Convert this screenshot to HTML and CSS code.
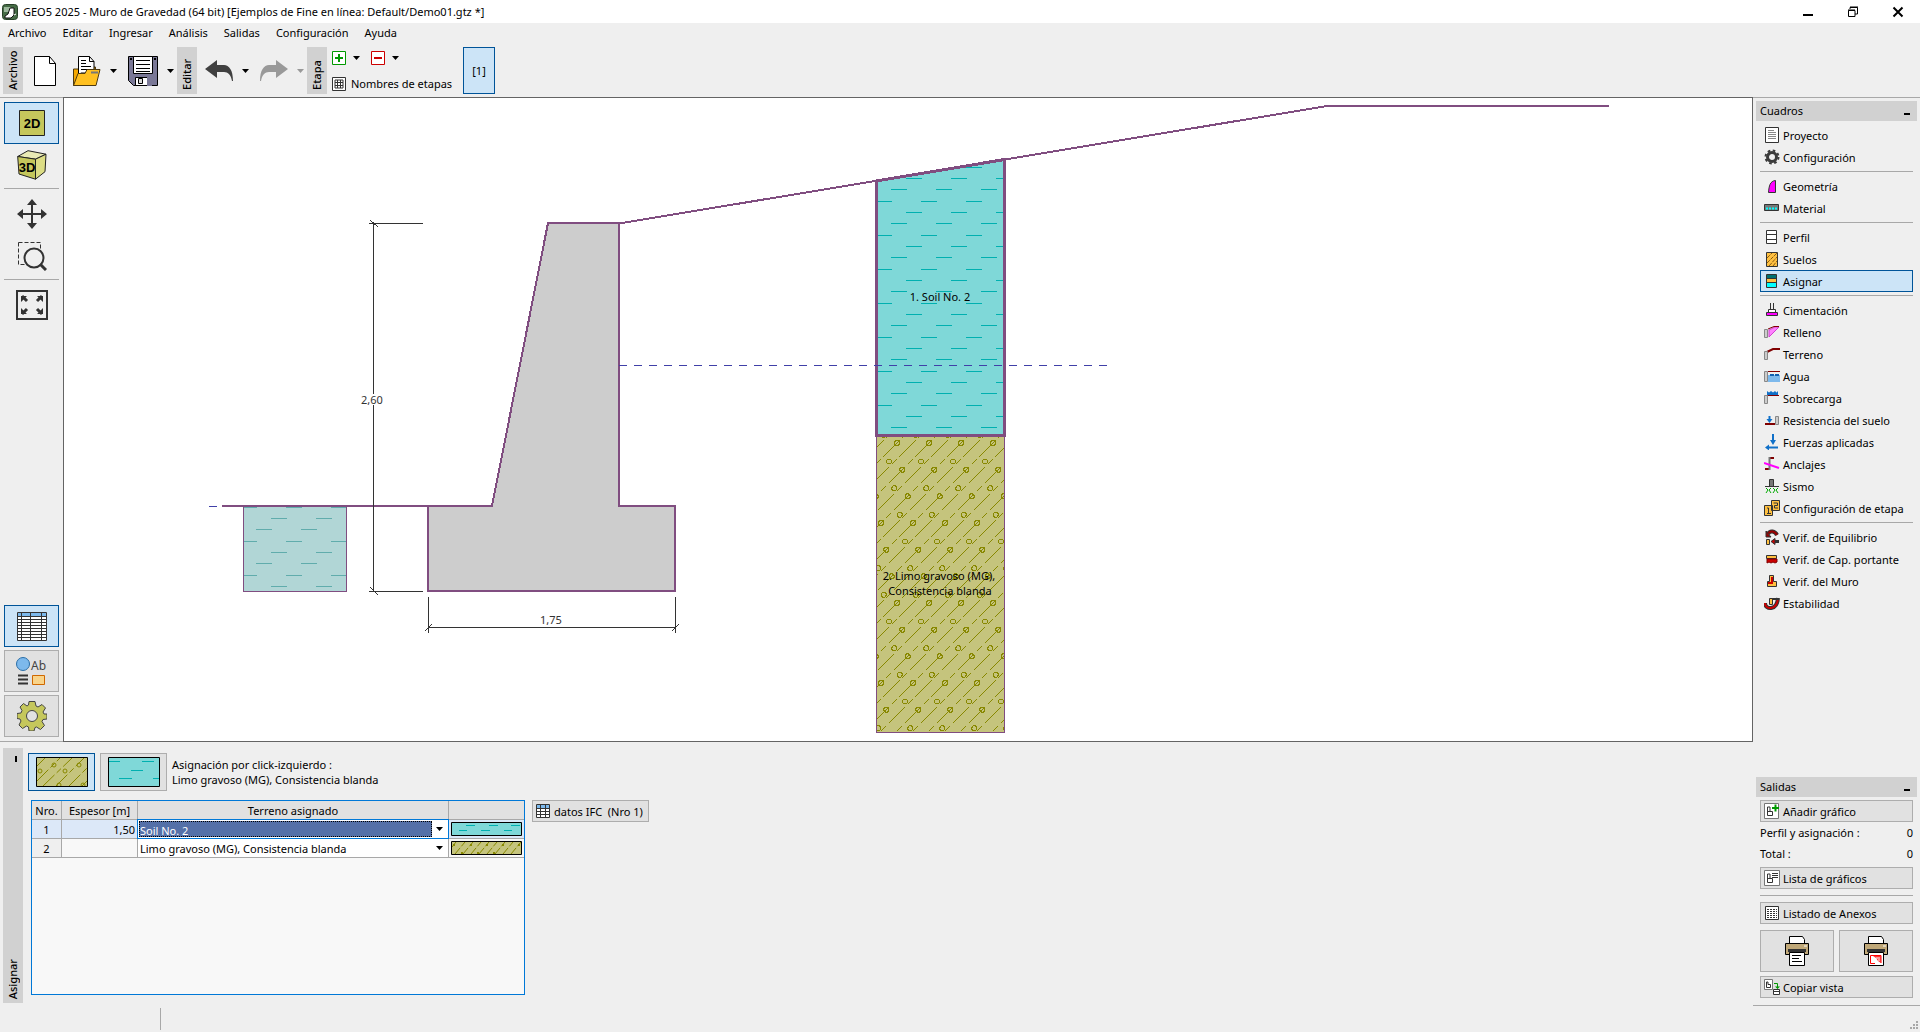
FILE: index.html
```html
<!DOCTYPE html>
<html lang="es">
<head>
<meta charset="utf-8">
<title>GEO5 2025 - Muro de Gravedad</title>
<link rel="stylesheet" href="styles.css">
</head>
<body>
<div class="app">
  <header class="titlebar">
    <svg class="app-icon" width="16" height="16" viewBox="0 0 16 16"><rect x=".5" y=".5" width="15" height="15" rx="3" fill="#456b45" stroke="#274027"/><path d="M2 3h7L7 8H2z" fill="#9db89d"/><path d="M3 12l3-2 2-6h4v7l-3 3H3z" fill="#fff" stroke="#111"/><path d="M12 11l2-1" stroke="#fff"/></svg>
    <h1 class="title">GEO5 2025 - Muro de Gravedad (64 bit) [Ejemplos de Fine en línea: Default/Demo01.gtz *]</h1>
    <div class="window-controls">
      <button class="win-btn" aria-label="Minimizar"><svg width="12" height="12" viewBox="0 0 12 12"><path d="M1 9h10" stroke="#000" stroke-width="2"/></svg></button>
      <button class="win-btn" aria-label="Restaurar"><svg width="12" height="12" viewBox="0 0 12 12"><path d="M3 3V1.500h7.500V8H8M1.500 4.500h6.500v6h-6.500zM1 4h7M3 1h8" fill="none" stroke="#000"/></svg></button>
      <button class="win-btn" aria-label="Cerrar"><svg width="12" height="12" viewBox="0 0 12 12"><path d="M1.500 1.500l9 9M10.500 1.500l-9 9" stroke="#000" stroke-width="2"/></svg></button>
    </div>
  </header>

  <nav class="menubar">
    <button>Archivo</button><button>Editar</button><button>Ingresar</button><button>Análisis</button><button>Salidas</button><button>Configuración</button><button>Ayuda</button>
  </nav>

  <div class="toolbar">
    <span class="strip">Archivo</span>
    <div class="tools tools-file">
      <button class="tool" aria-label="Nuevo"><svg width="24" height="32" viewBox="0 0 24 32"><path d="M1.500 1.500h15l6 7v22h-21z" fill="#fff" stroke="#000"/><path d="M16.500 1.500v7h6" fill="none" stroke="#000"/></svg></button>
      <button class="tool" aria-label="Abrir"><svg width="28" height="32" viewBox="0 0 28 32"><path d="M.500 30.500v-16.500h6v-2h16v18z" fill="#f5a800" stroke="#4d3a10"/><path d="M5.500 20V1.500h11l4.500 5V18H8z" fill="#fff" stroke="#000"/><path d="M16.500 1.500v5h4.500M8 5.500h5M8 8.500h5M8 11.500h10M8 14.500h9" fill="none" stroke="#000"/><path d="M.500 30.500l4.500-12h7l2-4h13l-4 16z" fill="#ffc020" stroke="#4d3a10"/><path d="M18 17.500h7" stroke="#777" stroke-width="2"/></svg></button>
      <button class="drop" aria-label="Abrir recientes"><svg width="7" height="4" viewBox="0 0 7 4"><path d="M0 0h7L3.500 4z"/></svg></button>
      <button class="tool" aria-label="Guardar"><svg width="30" height="32" viewBox="0 0 30 32"><path d="M.500 1.500h29v29h-24l-5-5z" fill="#7a7896" stroke="#000"/><path d="M5.500 1.500h19v17h-19z" fill="#fff" stroke="#000"/><path d="M8 5.500h14M8 9.500h14M8 13.500h14M8 16.500h14" stroke="#000"/><path d="M2 3h2v2H2zM26 3h2v2h-2z"/><path d="M7.500 22.500h16v8h-16z" fill="#fff" stroke="#000"/><path d="M19 22h5v9h-5z" fill="#7a7896"/><path d="M10.500 23.500h4v5h-4z" fill="#ddd" stroke="#000"/></svg></button>
      <button class="drop" aria-label="Guardar como"><svg width="7" height="4" viewBox="0 0 7 4"><path d="M0 0h7L3.500 4z"/></svg></button>
    </div>
    <span class="strip">Editar</span>
    <div class="tools tools-edit">
      <button class="tool" aria-label="Deshacer"><svg width="28" height="22" viewBox="0 0 28 22"><path d="M0 9L12 0v5h7c5 0 9 5 9 16h-1c-1-6-4-9-8-9h-7v6z" fill="#404040"/></svg></button>
      <button class="drop" aria-label="Lista deshacer"><svg width="7" height="4" viewBox="0 0 7 4"><path d="M0 0h7L3.500 4z"/></svg></button>
      <button class="tool" aria-label="Rehacer"><svg width="28" height="22" viewBox="0 0 28 22"><path d="M28 9L16 0v5H9C4 5 0 10 0 21h1c1-6 4-9 8-9h7v6z" fill="#999"/></svg></button>
      <button class="drop" aria-label="Lista rehacer"><svg width="7" height="4" viewBox="0 0 7 4"><path d="M0 0h7L3.500 4z" fill="#999"/></svg></button>
    </div>
    <span class="strip">Etapa</span>
    <div class="stage">
      <div class="stage-row">
        <button class="tool" aria-label="Agregar etapa"><svg width="14" height="14" viewBox="0 0 14 14"><path d="M.500.500h13v13H.500z" fill="#fff" stroke="#090"/><path d="M7 3v8M3 7h8" stroke="#090" stroke-width="2"/></svg></button>
        <button class="drop" aria-label="Opciones de agregar"><svg width="7" height="4" viewBox="0 0 7 4"><path d="M0 0h7L3.500 4z"/></svg></button>
        <button class="tool" aria-label="Quitar etapa"><svg width="14" height="14" viewBox="0 0 14 14"><path d="M.500.500h13v13H.500z" fill="#fff" stroke="#c00"/><path d="M3 7h8" stroke="#c00" stroke-width="2"/></svg></button>
        <button class="drop" aria-label="Opciones de quitar"><svg width="7" height="4" viewBox="0 0 7 4"><path d="M0 0h7L3.500 4z"/></svg></button>
      </div>
      <button class="stage-names"><svg width="14" height="14" viewBox="0 0 14 14"><path d="M.500.500h13v13H.500z" fill="#fff" stroke="#333"/><path d="M3 3h8v8H3zM3 5.500h8M3 8.500h8M5.500 3v8M8.500 3v8" fill="none" stroke="#333"/></svg>Nombres de etapas</button>
    </div>
    <button class="stage-tab">[1]</button>
  </div>

  <main class="workspace">
    <aside class="views">
      <button class="view selected" aria-label="Vista 2D"><svg width="26" height="26" viewBox="0 0 26 26"><path d="M.500.500h25v25H.500z" fill="#c5c75c" stroke="#222"/><text x="13" y="18" class="view-label">2D</text></svg></button>
      <button class="view plain" aria-label="Vista 3D"><svg width="30" height="30" viewBox="0 0 30 30"><g stroke="#222" stroke-linejoin="round"><path d="M.700 6.500L11 .700l18 3.500-10.500 5z" fill="#e9eab5"/><path d="M.700 6.500l17.800 2.700v20L2 24z" fill="#c5c75c"/><path d="M18.500 9.200l10.500-5-1 17.500-9.500 7.500z" fill="#dcdd85"/></g><text x="10" y="22" class="view-label">3D</text></svg></button>
      <hr>
      <button class="view plain" aria-label="Mover"><svg width="30" height="30" viewBox="0 0 30 30"><path d="M15 5v20M5 15h20" stroke="#333" stroke-width="2"/><path d="M15 0l5 6H10zM15 30l5-6H10zM0 15l6-5v10zM30 15l-6-5v10z" fill="#333"/></svg></button>
      <button class="view plain" aria-label="Ampliar zona"><svg width="30" height="30" viewBox="0 0 30 30"><path d="M1.500 1.500h22v22h-22z" fill="none" stroke="#333" stroke-dasharray="4 2"/><circle cx="17" cy="17" r="9.500" fill="#efefef" stroke="#333" stroke-width="2"/><path d="M23 23l6 6" stroke="#333" stroke-width="3"/></svg></button>
      <hr>
      <button class="view plain" aria-label="Ajustar vista"><svg width="32" height="30" viewBox="0 0 32 30"><path d="M1 1h30v28H1z" fill="none" stroke="#333" stroke-width="2"/><path d="M6 6l5 5M26 6l-5 5M6 24l5-5M26 24l-5-5" stroke="#333" stroke-width="3"/><path d="M5 6h6L5 12zM27 6h-6l6 6zM5 24h6l-6-6zM27 24h-6l6-6z" fill="#333"/></svg></button>
      <div class="view-modes">
        <button class="view selected" aria-label="Tabla"><svg width="30" height="29" viewBox="0 0 30 29"><path d="M.500.500h29v28H.500z" fill="#fff"/><path d="M1 1h28v4H1z" fill="#7db9ec"/><path d="M.500.500h29v28H.500zM4.500 0v29M13.500 0v29M24.500 0v29M0 4.500h30M0 7.500h30M0 10.500h30M0 13.500h30M0 16.500h30M0 19.500h30M0 22.500h30M0 25.500h30" fill="none" stroke="#333"/></svg></button>
        <button class="view raised" aria-label="Leyenda"><svg width="32" height="28" viewBox="0 0 32 28"><circle cx="7" cy="7" r="6.500" fill="#7db9ec" stroke="#2b6fa8"/><path d="M2 18.500h10M2 22.500h10M2 26.500h10" stroke="#333" stroke-width="2"/><path d="M16.500 18.500h12v9h-12z" fill="#f9d48a" stroke="#d06800"/><text x="15" y="13" class="legend-label">Ab</text></svg></button>
        <button class="view raised" aria-label="Ajustes"><svg width="30" height="30" viewBox="-15 -15 30 30"><path d="M-3-14.500h6l1 4.500 2 1 4-2.500 3.500 3.500L11-4l1 2 3 0v5l-4 .500-1 2 2.500 4-4 4-4-2.500-1.500.500-1 3.500h-5l-.500-4-2-1-4 2.500-3.500-3.500L-11 5l-1-2-3-.500v-5l4-.500 1-2.500-2-3.500 3.500-3.500L-5-10l1.500-1z" fill="#c5c75c" stroke="#444"/><circle r="5.500" fill="#e1e1e1" stroke="#444"/></svg></button>
      </div>
    </aside>

    <section class="canvas">
      <svg class="drawing" viewBox="64 98 1688 643">
        <defs>
          <pattern id="silt" patternUnits="userSpaceOnUse" x="876" y="201" width="45" height="34"><path d="M0 .500h16M30 11.500h15M0 11.500h1M15 22.500h16" stroke="#00b0b0"/></pattern>
          <pattern id="silt-pale" patternUnits="userSpaceOnUse" x="241" y="541" width="45" height="34"><path d="M0 .500h16M30 11.500h15M0 11.500h1M15 22.500h16" stroke="#60acac"/></pattern>
          <pattern id="gravel" patternUnits="userSpaceOnUse" x="860" y="430" width="32" height="160">
            <g fill="none" stroke="#888800">
              <path stroke-dasharray="23 4 7 3.710" d="M-142 160L18 0M-110 160L50 0M-78 160L82 0M-46 160L114 0M-14 160L146 0M18 160L178 0M-158 160L2 0M-126 160L34 0M-94 160L66 0M-62 160L98 0M-30 160L130 0M2 160L162 0"/>
              <circle cx="5" cy="13" r="2.500"/><circle cx="10.300" cy="39.700" r="2.500"/><circle cx="15.700" cy="66.300" r="2.500"/><circle cx="21" cy="93" r="2.500"/><circle cx="26.300" cy="119.700" r="2.500"/><circle cx="-.300" cy="146.300" r="2.500"/><circle cx="31.700" cy="146.300" r="2.500"/>
              <circle cx="29" cy="31.500" r="2.500"/><circle cx="2.300" cy="58.200" r="2.500"/><circle cx="34.300" cy="58.200" r="2.500"/><circle cx="7.700" cy="84.800" r="2.500"/><circle cx="13" cy="111.500" r="2.500"/><circle cx="18.300" cy="138.200" r="2.500"/><circle cx="23.700" cy="4.800" r="2.500"/>
            </g>
          </pattern>
        </defs>
        <path d="M243.500 506.500h103v85h-103z" fill="#b1d6d6"/>
        <path d="M243.500 506.500h103v85h-103z" fill="url(#silt-pale)" stroke="#804d80"/>
        <path d="M876.500 436v296.500h128V436z" fill="#c5c47d"/>
        <path d="M876.500 436v296.500h128V436z" fill="url(#gravel)" stroke="#804d80"/>
        <path d="M876.500 181v254.500h128V159.500z" fill="#7fd8d8"/>
        <path d="M876.500 181v254.500h128V159.500z" fill="url(#silt)" stroke="#804d80" stroke-width="3"/>
        <path d="M428 506h64l56-283h71v283h56v85H428z" fill="#cdcdcd"/>
        <path d="M222 506h270l56-283h71v283h56v85H428v-85M619 223h3L1327 106h282" fill="none" stroke="#804d80" stroke-width="2"/>
        <path d="M209 506.500h8M619 365.500h488" stroke="#4040a8" stroke-dasharray="8 7"/>
        <g fill="none" stroke="#333">
          <path d="M373.500 223v171M373.500 405v187M369 223.500h54M369 591.500h54M370 220l8 7M370 587l8 8"/>
          <path d="M428.500 597v36M675.500 597v36M428 627.500h248M425 631l7-7M672 631l7-7"/>
        </g>
        <g class="drawing-text">
          <g class="dimension"><text x="372" y="404">2,60</text><text x="551" y="624">1,75</text></g>
          <text x="940" y="301">1. Soil No. 2</text>
          <text x="939" y="580">2. Limo gravoso (MG),</text><text x="940" y="595">Consistencia blanda</text>
        </g>
      </svg>
    </section>

    <section class="assign">
      <div class="assign-strip"><span class="collapse-mark"></span><span class="strip-text">Asignar</span></div>
      <div class="assign-body">
        <div class="soil-pick">
          <button class="soil selected" aria-label="Limo gravoso (MG)"><svg width="52" height="30" viewBox="0 0 52 30"><path d="M.500.500h51v29H.500z" fill="#c5c47d"/><g fill="none" stroke="#888800"><path d="M1 9L9 1M1 24L24 1M7 29L36 1" stroke-dasharray="16 3 6 3"/><path d="M20 29L48 1M33 29L51 11M46 29l5-5" stroke-dasharray="16 3 6 3"/><circle cx="18" cy="8" r="2"/><circle cx="43" cy="8" r="2"/><circle cx="4" cy="14" r="2"/><circle cx="29" cy="14" r="2"/><circle cx="23" cy="28" r="2"/><circle cx="47" cy="28" r="2"/></g><path d="M.500.500h51v29H.500z" fill="none" stroke="#000"/></svg></button>
          <button class="soil" aria-label="Soil No. 2"><svg width="52" height="30" viewBox="0 0 52 30"><path d="M.500.500h51v29H.500z" fill="#7fd8d8" stroke="#000"/><path d="M1 4.500h11M34 4.500h12M23 13.500h12M11 21.500h13M45 21.500h6" stroke="#00b0b0"/></svg></button>
          <p class="pick-text">Asignación por click-izquierdo :<br>Limo gravoso (MG), Consistencia blanda</p>
        </div>
        <div class="assign-main">
          <div class="grid-box">
            <table class="grid">
              <colgroup><col class="c-num"><col class="c-thick"><col class="c-soil"><col class="c-swatch"></colgroup>
              <thead><tr><th>Nro.</th><th>Espesor [m]</th><th>Terreno asignado</th><th></th></tr></thead>
              <tbody>
                <tr class="active"><td class="num">1</td><td class="thick">1,50</td>
                  <td class="pick"><div class="combo focused"><select aria-label="Terreno asignado 1"><option>Soil No. 2</option><option>Limo gravoso (MG), Consistencia blanda</option></select><svg width="7" height="4" viewBox="0 0 7 4"><path d="M0 0h7L3.500 4z"/></svg></div></td>
                  <td class="swatch"><svg width="71" height="14" viewBox="0 0 71 14"><path d="M.500.500h70v13H.500z" fill="#7fd8d8" stroke="#000"/><path d="M15 3.500h9M38 3.500h9M60 3.500h9M8 8.500h8M30 8.500h9M53 8.500h8" stroke="#00b0b0"/></svg></td></tr>
                <tr><td class="num">2</td><td class="thick"></td>
                  <td class="pick"><div class="combo"><select aria-label="Terreno asignado 2"><option>Limo gravoso (MG), Consistencia blanda</option><option>Soil No. 2</option></select><svg width="7" height="4" viewBox="0 0 7 4"><path d="M0 0h7L3.500 4z"/></svg></div></td>
                  <td class="swatch"><svg width="71" height="14" viewBox="0 0 71 14"><path d="M.500.500h70v13H.500z" fill="#c5c47d"/><path d="M1 6l4-5M4 13L14 1M12 13L22 1M20 13L30 1M28 13L38 1M36 13L46 1M44 13L54 1M52 13L62 1M60 13L70 1" stroke="#888800" stroke-dasharray="8 2"/><path d="M2 4h2M19 4h2M35 4h2M51 4h2M67 4h2M10 12h2M26 12h2M42 12h2" stroke="#888800" stroke-width="2"/><path d="M.500.500h70v13H.500z" fill="none" stroke="#000"/></svg></td></tr>
              </tbody>
            </table>
          </div>
          <button class="btn ifc"><svg width="14" height="14" viewBox="0 0 14 14"><path d="M.500.500h13v13H.500z" fill="#fff"/><path d="M1 1h12v4H1z" fill="#7db9ec"/><path d="M.500.500h13v13H.500zM4.500 0v14M9.500 0v14M0 4.500h14M0 7.500h14M0 10.500h14" fill="none" stroke="#333"/></svg>datos IFC&nbsp; (Nro 1)</button>
        </div>
      </div>
    </section>

    <aside class="side">
      <div class="side-head"><h2>Cuadros</h2><button class="mini" aria-label="Minimizar cuadros"></button></div>
      <nav class="frames">
        <button class="item"><svg viewBox="0 0 16 16"><path d="M1.500.500h13v15h-13z" fill="#fff" stroke="#333"/><path d="M4 3.500h6M4 5.500h8M4 7.500h8M4 9.500h8M4 11.500h8" stroke="#888"/></svg>Proyecto</button>
        <button class="item"><svg viewBox="0 0 16 16"><circle cx="8" cy="8" r="4.500" fill="none" stroke="#3b3b3b" stroke-width="3"/><circle cx="8" cy="8" r="6.500" fill="none" stroke="#3b3b3b" stroke-width="2" stroke-dasharray="2.600 2.500"/></svg>Configuración</button>
        <hr>
        <button class="item"><svg viewBox="0 0 16 16"><path d="M4.500 14.500C5 8 6 3 11.500 2.500v12z" fill="#f0f" stroke="#333"/></svg>Geometría</button>
        <button class="item"><svg viewBox="0 0 16 16"><path d="M.500 4.500h14v6H.500z" fill="#777" stroke="#333"/><path d="M2 8.500h12" stroke="#0ff" stroke-width="2" stroke-dasharray="2 1"/></svg>Material</button>
        <hr>
        <button class="item"><svg viewBox="0 0 16 16"><path d="M2.500 1.500h10v13h-10zM2 5.500h11M2 10.500h11" fill="#fff" stroke="#333"/></svg>Perfil</button>
        <button class="item"><svg viewBox="0 0 16 16"><path d="M2.500 1.500h11v14h-11z" fill="#ffc040"/><path d="M3 7l5-5M3 12L13 2M5 15l8-9M9 15l4-5" stroke="#8a5a10" stroke-dasharray="4 1"/><path d="M2.500 1.500h11v14h-11z" fill="none" stroke="#333"/></svg>Suelos</button>
        <button class="item selected"><svg viewBox="0 0 16 16"><path d="M2.500 1.500h10v13h-10z" fill="#ffc040" stroke="#333"/><path d="M3 2h9v3H3z" fill="#007070"/><path d="M3 10h9v4H3z" fill="#0ff"/><path d="M2 5.500h11M2 9.500h11" stroke="#333"/></svg>Asignar</button>
        <hr>
        <button class="item"><svg viewBox="0 0 16 16"><path d="M6.500 1v7M9.500 1v7" stroke="#333"/><path d="M4.500 7.500h7v3h-7z" fill="#fff" stroke="#333"/><path d="M2.500 10.500h11v3h-11z" fill="#f0f" stroke="#333"/></svg>Cimentación</button>
        <button class="item"><svg viewBox="0 0 16 16"><path d="M5 6l6-3h4L5 13z" fill="#ff80ff" stroke="#d040d0"/><path d="M4 5l6-2.500h5" fill="none" stroke="#800000"/><path d="M.500 5.500h3v8h-3z" fill="#ccc" stroke="#888"/></svg>Relleno</button>
        <button class="item"><svg viewBox="0 0 16 16"><path d="M3 6l6-3h7" fill="none" stroke="#800000" stroke-width="2"/><path d="M.500 5.500h3v8h-3z" fill="#ccc" stroke="#888"/></svg>Terreno</button>
        <button class="item"><svg viewBox="0 0 16 16"><path d="M4 7h12v7H4z" fill="#7db9ec"/><path d="M4 3.500h12" stroke="#800000"/><path d="M6 7h9" stroke="#0f5fb0" stroke-width="2" stroke-dasharray="4 1"/><path d="M.500 3.500h3v10h-3z" fill="#ccc" stroke="#888"/></svg>Agua</button>
        <button class="item"><svg viewBox="0 0 16 16"><path d="M3 5.500h12" stroke="#800000"/><path d="M3 5V1l2 1.500L7 1l2 1.500L11 1l1.500 1.500L14 1v4z" fill="#1070c8"/><path d="M.500 5.500h3v8h-3z" fill="#ccc" stroke="#888"/></svg>Sobrecarga</button>
        <button class="item"><svg viewBox="0 0 16 16"><path d="M1 12h10" stroke="#800000" stroke-width="2"/><path d="M5.500 4v4" stroke="#1070c8" stroke-width="2"/><path d="M2.500 7h6l-3 4z" fill="#1070c8"/><path d="M11.500 4.500h3v8h-3z" fill="#ccc" stroke="#888"/></svg>Resistencia del suelo</button>
        <button class="item"><svg viewBox="0 0 16 16"><path d="M9 0v8M4 13.500h10" stroke="#1070c8" stroke-width="2"/><path d="M6 6h6l-3 5zM5 10.500v6l-4-3z" fill="#1070c8"/></svg>Fuerzas aplicadas</button>
        <button class="item"><svg viewBox="0 0 16 16"><path d="M5 2h5M1 13h4" stroke="#800000" stroke-width="2"/><path d="M5.500 1v13" stroke="#777" stroke-width="2"/><path d="M0 7l15 5" stroke="#f0f" stroke-width="2"/></svg>Anclajes</button>
        <button class="item"><svg viewBox="0 0 16 16"><path d="M5.500 1.500h4v7h-4z" fill="#777" stroke="#333"/><path d="M1 8.500h14" stroke="#333"/><path d="M2 10l2 2-2 3M7 10l-2 2 2 3M9 10l2 2-2 3M14 10l-2 2 2 3" fill="none" stroke="#0a0"/></svg>Sismo</button>
        <button class="item"><svg viewBox="0 0 16 16"><path d="M.500 5.500h8v10h-8zM7.500.500h8v10h-8z" fill="#ffc040" stroke="#333"/><path d="M3 8h1.500v5.500M3 13.500h4M9.500 3h4v2.500h-3V8h3.500" fill="none" stroke="#333"/></svg>Configuración de etapa</button>
        <hr>
        <button class="item"><svg viewBox="0 0 16 16"><path d="M4 5c2-4 7-3 9 1" fill="none" stroke="#333" stroke-width="4"/><path d="M4 5c2-4 7-3 9 1" fill="none" stroke="#900" stroke-width="2"/><path d="M2 2v6h5z" fill="#900" stroke="#333"/><path d="M2.500 10.500h3v5h-3z" fill="#ffc040" stroke="#333"/><path d="M10 12.500h5" stroke="#333" stroke-width="3"/><path d="M11 9.500v6l-4-3z" fill="#c00" stroke="#333"/></svg>Verif. de Equilibrio</button>
        <button class="item"><svg viewBox="0 0 16 16"><path d="M2.500 4.500h10v3h-10z" fill="#ffc040" stroke="#333"/><path d="M3 8v4l2-1 2 1 2-1 2 1 2-1V8z" fill="#c00" stroke="#800000"/></svg>Verif. de Cap. portante</button>
        <button class="item"><svg viewBox="0 0 16 16"><path d="M5.500 2.500h4v6h3v5h-9v-5h2z" fill="#ffc040" stroke="#333"/><path d="M4 10h5M8 4v5" stroke="#c00" stroke-width="2"/></svg>Verif. del Muro</button>
        <button class="item"><svg viewBox="0 0 16 16"><path d="M1 8c0 7 12 8 13-5" fill="none" stroke="#333" stroke-width="4"/><path d="M1 8c0 7 12 8 13-5" fill="none" stroke="#c00" stroke-width="2"/><path d="M8 4h7" stroke="#333" stroke-width="2"/><path d="M5.500 3.500h3v6h-3z" fill="#ffc040" stroke="#333"/></svg>Estabilidad</button>
      </nav>

      <div class="side-head outputs-head"><h2>Salidas</h2><button class="mini" aria-label="Minimizar salidas"></button></div>
      <div class="outputs">
        <button class="btn"><svg viewBox="0 0 16 16"><path d="M.500.500h14v15H.500z" fill="#fff" stroke="#777"/><path d="M3.500 4v8.500h5v-4H6V4zM3.500 8.500H6" fill="none" stroke="#333"/><path d="M11.500 1.500v7M8 5h7" stroke="#090" stroke-width="2"/></svg>Añadir gráfico</button>
        <p class="count"><span>Perfil y asignación :</span><span>0</span></p>
        <p class="count"><span>Total :</span><span>0</span></p>
        <button class="btn"><svg viewBox="0 0 16 16"><path d="M.500.500h15v15H.500z" fill="#fff" stroke="#777"/><path d="M3.500 4v8.500h5v-4H6V4zM3.500 8.500H6M8 3.500h6M8 5.500h6M8 7.500h6" fill="none" stroke="#333"/></svg>Lista de gráficos</button>
        <hr>
        <button class="btn"><svg viewBox="0 0 16 16"><path d="M1.500 1.500h13v13h-13z" fill="#fff" stroke="#333"/><path d="M3 4.500h10M3 6.500h10M3 8.500h10M3 10.500h10M3 12.500h10" stroke="#333" stroke-dasharray="2 1"/></svg>Listado de Anexos</button>
        <div class="printers">
          <button class="btn printer" aria-label="Imprimir lista"><svg width="24" height="30" viewBox="0 0 24 30"><path d="M4.500 8V.500h13l2 3V8" fill="#fff" stroke="#000"/><path d="M.500 7.500h23v11H.500z" fill="#c0a878" stroke="#000"/><path d="M3 13h18v3H3z" fill="#333"/><path d="M4.500 16.500h15v13h-15z" fill="#fff" stroke="#000"/><path d="M7 19.500h9M7 22.500h7M7 25.500h10" stroke="#000"/><path d="M19 10h3" stroke="#fff"/></svg></button>
          <button class="btn printer" aria-label="Imprimir vista"><svg width="24" height="30" viewBox="0 0 24 30"><path d="M4.500 8V.500h13l2 3V8" fill="#fff" stroke="#000"/><path d="M.500 7.500h23v11H.500z" fill="#c0a878" stroke="#000"/><path d="M3 13h18v3H3z" fill="#333"/><path d="M4.500 16.500h15v13h-15z" fill="#fff" stroke="#000"/><path d="M9 19.500H6.500v8H11M9 19.500h8V27" fill="none" stroke="red"/><path d="M9 20h8v7l-3-2-2-3z" fill="#f33"/><path d="M12 22h4M14 24h2" stroke="#fff"/><path d="M19 10h3" stroke="#fff"/></svg></button>
        </div>
        <button class="btn"><svg viewBox="0 0 16 16"><path d="M.500.500h8v10h-8z" fill="#fff" stroke="#777"/><path d="M2.500 3v5.500h4v-3H4V3z" fill="none" stroke="#333"/><path d="M10 4.500h3.500V9" fill="none" stroke="#090"/><path d="M11 7.500h5L13.500 10z" fill="#090"/><path d="M9.500 10.500h6v5h-6zM9 12.500h7" fill="#fff" stroke="#333"/></svg>Copiar vista</button>
      </div>
    </aside>
  </main>

  <footer class="status">
    <span class="status-cell"></span>
    <svg width="9" height="9" viewBox="0 0 9 9"><path d="M6 0h2v2H6zM3 3h2v2H3zM6 3h2v2H6zM0 6h2v2H0zM3 6h2v2H3zM6 6h2v2H6z" fill="#a8a8a8"/></svg>
  </footer>
</div>
</body>
</html>
```
FILE: styles.css
```css
* { box-sizing: border-box; }
body {
  margin: 0;
  background: #efefef;
  color: #000;
  font-family: "Noto Sans", "Open Sans", sans-serif;
  font-size: 11px;
  line-height: 15px;
}
button, select {
  margin: 0;
  padding: 0;
  border: 0;
  background: none;
  color: inherit;
  font: inherit;
}
h1, h2, p { margin: 0; font-size: inherit; font-weight: 400; }
svg { display: block; flex: none; }
hr { height: 1px; margin: 3px 0; border: 0; background: #a8a8a8; }

.app { display: flex; flex-direction: column; min-height: 100vh; }

.titlebar { display: flex; align-items: center; height: 23px; padding-left: 2px; background: #fff; }
.title { margin-left: 5px; }
.window-controls { display: flex; margin-left: auto; }
.win-btn { display: grid; place-items: center; width: 45px; height: 23px; }

.menubar { display: flex; gap: 16px; height: 20px; padding: 0 0 2px 8px; }

.toolbar { display: flex; height: 54px; padding: 4px 3px 3px; }
.strip {
  width: 20px;
  padding: 4px 0;
  background: #d1d1d1;
  font-weight: 500;
  line-height: 20px;
  writing-mode: vertical-rl;
  transform: rotate(180deg);
}
.tools { display: flex; align-items: center; }
.tools-file { padding: 0 3px 0 10px; }
.tools-edit { padding: 0 3px 0 8px; }
.tools-file .tool:first-child { margin-right: 16px; }
.tools-file .tool + .drop + .tool, .tools-edit .drop + .tool { margin-left: 11px; }
.tools .drop { margin-left: 9px; }
.stage { display: flex; flex-direction: column; justify-content: space-between; width: 131px; margin-left: 5px; padding: 4px 0 3px; }
.stage-row { display: flex; align-items: center; }
.stage-row .drop { margin: 0 11px 0 7px; }
.stage-names { display: flex; align-items: center; gap: 5px; white-space: nowrap; }
.stage-tab { width: 32px; border: 1px solid #005499; background: #cce4f7; }

.workspace {
  display: grid;
  flex: 1;
  grid-template-columns: 63px minmax(0, 1fr) 167px;
  grid-template-rows: 1fr 264px;
}
.views { display: flex; flex-direction: column; padding: 4px 4px 3px; border-top: 1px solid #a8a8a8; border-bottom: 1px solid #a8a8a8; }
.views hr { width: 55px; margin: 2px 0 4px; flex: none; }
.view { display: grid; place-items: center; height: 42px; width: 55px; border: 1px solid transparent; }
.view.selected { border-color: #005499; background: #cce4f7; }
.view.raised { border-color: #adadad; background: #e1e1e1; }
.view-modes { display: grid; gap: 3px; margin-top: auto; padding-bottom: 1px; }
.view-label { font: 700 13px "Liberation Sans", sans-serif; text-anchor: middle; }
.legend-label { font-size: 12px; fill: #444; }

.canvas { border: 1px solid #646464; background: #fff; }
.drawing { width: 100%; height: 100%; shape-rendering: crispEdges; }
.drawing-text { text-anchor: middle; }
.dimension { fill: #333; }

.assign { display: flex; grid-column: 1 / 3; grid-row: 2; padding: 6px 3px 3px; }
.assign-strip { display: flex; flex-direction: column; justify-content: space-between; align-items: center; width: 20px; padding: 8px 0 4px; background: #d1d1d1; }
.collapse-mark { width: 2px; height: 6px; margin-left: 5px; background: #000; }
.strip-text { font-weight: 500; line-height: 20px; writing-mode: vertical-rl; transform: rotate(180deg); }
.assign-body { flex: 1; padding: 5px 0 8px 5px; display: flex; flex-direction: column; }
.soil-pick { display: flex; gap: 5px; }
.soil { display: grid; place-items: center; width: 67px; height: 38px; border: 1px solid #adadad; background: #e1e1e1; }
.soil.selected { border-color: #005499; background: #cce4f7; }
.pick-text { padding-top: 4px; }
.assign-main { display: flex; flex: 1; align-items: flex-start; gap: 7px; padding: 9px 0 0 3px; }
.grid-box { width: 494px; height: 100%; border: 1px solid #0078d7; background: #f8f8f8; }
.grid { width: 100%; border-spacing: 0; table-layout: fixed; }
.c-num { width: 30px; }
.c-thick { width: 76px; }
.c-soil { width: 311px; }
.grid th, .grid td { height: 19px; padding: 0; border: 0 solid #a8a8a8; border-width: 0 1px 1px 0; line-height: 17px; }
.grid th:last-child, .grid td:last-child { border-right: 0; }
.grid th { background: #e1e1e1; font-weight: 400; }
.grid td.num { background: #efefef; text-align: center; }
.grid .active td.num, .grid .active td { background: #dce8f8; }
.thick { text-align: right; }
.grid td.thick { padding-right: 2px; }
.grid td.swatch { padding-left: 2px; }
.combo { display: flex; align-items: center; height: 18px; padding: 1px 5px 1px 1px; background: #fff; }
.combo.focused { outline: 1px solid #0078d7; }
.combo select { flex: 1; align-self: stretch; min-width: 0; margin-right: 4px; padding-left: 1px; appearance: none; }
.combo.focused select { border: 1px dotted #000; padding-left: 0; background: #5470a8; color: #fff; }

.btn { display: flex; align-items: center; gap: 3px; height: 22px; padding: 0 3px; border: 1px solid #adadad; background: #e1e1e1; white-space: nowrap; }
.ifc { gap: 4px; padding-right: 5px; }

.side { display: flex; flex-direction: column; grid-column: 3; grid-row: 1 / 3; padding: 3px 3px 7px; border-top: 1px solid #a8a8a8; border-bottom: 1px solid #a8a8a8; }
.side-head { display: flex; align-items: center; justify-content: space-between; height: 20px; padding: 0 7px 1px 4px; background: #d1d1d1; }
.mini { width: 6px; height: 2px; margin-top: 6px; background: #000; }
.frames { display: flex; flex-direction: column; padding: 3px 4px 0; }
.item { display: flex; align-items: center; gap: 3px; height: 22px; padding: 0 3px; border: 1px solid transparent; white-space: nowrap; }
.item.selected { border-color: #005499; background: #cce4f7; }
.item svg, .outputs .btn svg { width: 16px; height: 16px; }
.outputs-head { margin-top: auto; }
.outputs { display: flex; flex-direction: column; padding: 3px 4px 0; }
.count { display: flex; justify-content: space-between; height: 21px; line-height: 22px; }
.count + .btn { margin-top: 3px; }
.outputs hr { margin: 6px 0; }
.printers { display: grid; grid-template-columns: 1fr 1fr; gap: 5px; margin: 6px 0 4px; }
.outputs .printer { justify-content: center; height: 42px; }
.outputs .printer svg { width: 24px; height: 30px; }

.status { display: flex; align-items: stretch; justify-content: space-between; height: 26px; padding: 2px 1px 2px 0; }
.status-cell { width: 161px; border-right: 1px solid #a8a8a8; }
.status svg { align-self: flex-end; }
```
